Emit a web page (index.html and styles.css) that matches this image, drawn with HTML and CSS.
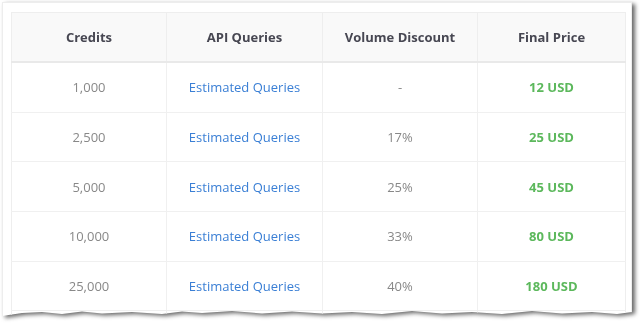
FILE: index.html
```html
<!DOCTYPE html>
<html>
<head>
<meta charset="utf-8">
<link rel="stylesheet" href="styles.css">
</head>
<body>
<div class="shadow">
  <div class="card">
    <table class="pricing">
      <colgroup>
        <col class="c1"><col class="c2"><col class="c3"><col class="c4">
      </colgroup>
      <thead>
        <tr><th>Credits</th><th>API Queries</th><th>Volume Discount</th><th>Final Price</th></tr>
      </thead>
      <tbody>
        <tr><td>1,000</td><td><a href="#">Estimated Queries</a></td><td>-</td><td class="price">12 USD</td></tr>
        <tr><td>2,500</td><td><a href="#">Estimated Queries</a></td><td>17%</td><td class="price">25 USD</td></tr>
        <tr><td>5,000</td><td><a href="#">Estimated Queries</a></td><td>25%</td><td class="price">45 USD</td></tr>
        <tr><td>10,000</td><td><a href="#">Estimated Queries</a></td><td>33%</td><td class="price">80 USD</td></tr>
        <tr><td>25,000</td><td><a href="#">Estimated Queries</a></td><td>40%</td><td class="price">180 USD</td></tr>
        <tr><td>&nbsp;</td><td></td><td></td><td></td></tr>
      </tbody>
    </table>
  </div>
</div>
</body>
</html>
```

FILE: styles.css
```css
html, body {
  margin: 0;
  padding: 0;
  background: #ffffff;
}
body {
  width: 640px;
  height: 325px;
  overflow: hidden;
  font-family: "Open Sans", "Noto Sans", sans-serif;
}
.shadow {
  padding: 2px;
  filter: drop-shadow(3px 2px 2px rgba(0, 0, 0, 0.6));
}
.card {
  box-sizing: border-box;
  width: 630px;
  height: 318px;
  background: #ffffff;
  border: 1px solid #ededed;
  padding: 9px 6px 0 8px;
  overflow: hidden;
  clip-path: polygon(0 0, 630px 0, 630px 310px,
    615px 312px, 590px 310px, 560px 311.5px, 530px 309px, 500px 312px,
    470px 310px, 440px 311.5px, 410px 309px, 380px 312px, 350px 310px,
    320px 311.5px, 290px 309.5px, 260px 311.5px, 230px 309px, 200px 311px,
    180px 309.5px, 160px 312px, 130px 310px, 100px 311.5px, 80px 309.5px,
    60px 312px, 40px 310px, 20px 311px, 0 314px);
}
.pricing {
  width: 614px;
  border-collapse: collapse;
  table-layout: fixed;
  border: 1px solid #eeeeee;
  font-size: 13px;
}
.c1 { width: 155px; }
.c2 { width: 156px; }
.c3 { width: 155px; }
.c4 { width: 148px; }
.pricing th {
  height: 48px;
  background: #f9f9f9;
  color: #474752;
  font-weight: 700;
  border-left: 1px solid #eeeeee;
  border-bottom: 2px solid #e9e9e9;
  text-align: center;
  padding: 0;
}
.pricing td {
  height: 48.7px;
  color: #888888;
  text-align: center;
  border-left: 1px solid #f0f0f0;
  border-bottom: 1px solid #f0f0f0;
  padding: 0;
}
.pricing th:first-child, .pricing td:first-child { border-left: none; }
.pricing a {
  color: #3a7fd5;
  text-decoration: none;
}
.pricing td.price {
  color: #5cb85c;
  font-weight: 700;
}
```
